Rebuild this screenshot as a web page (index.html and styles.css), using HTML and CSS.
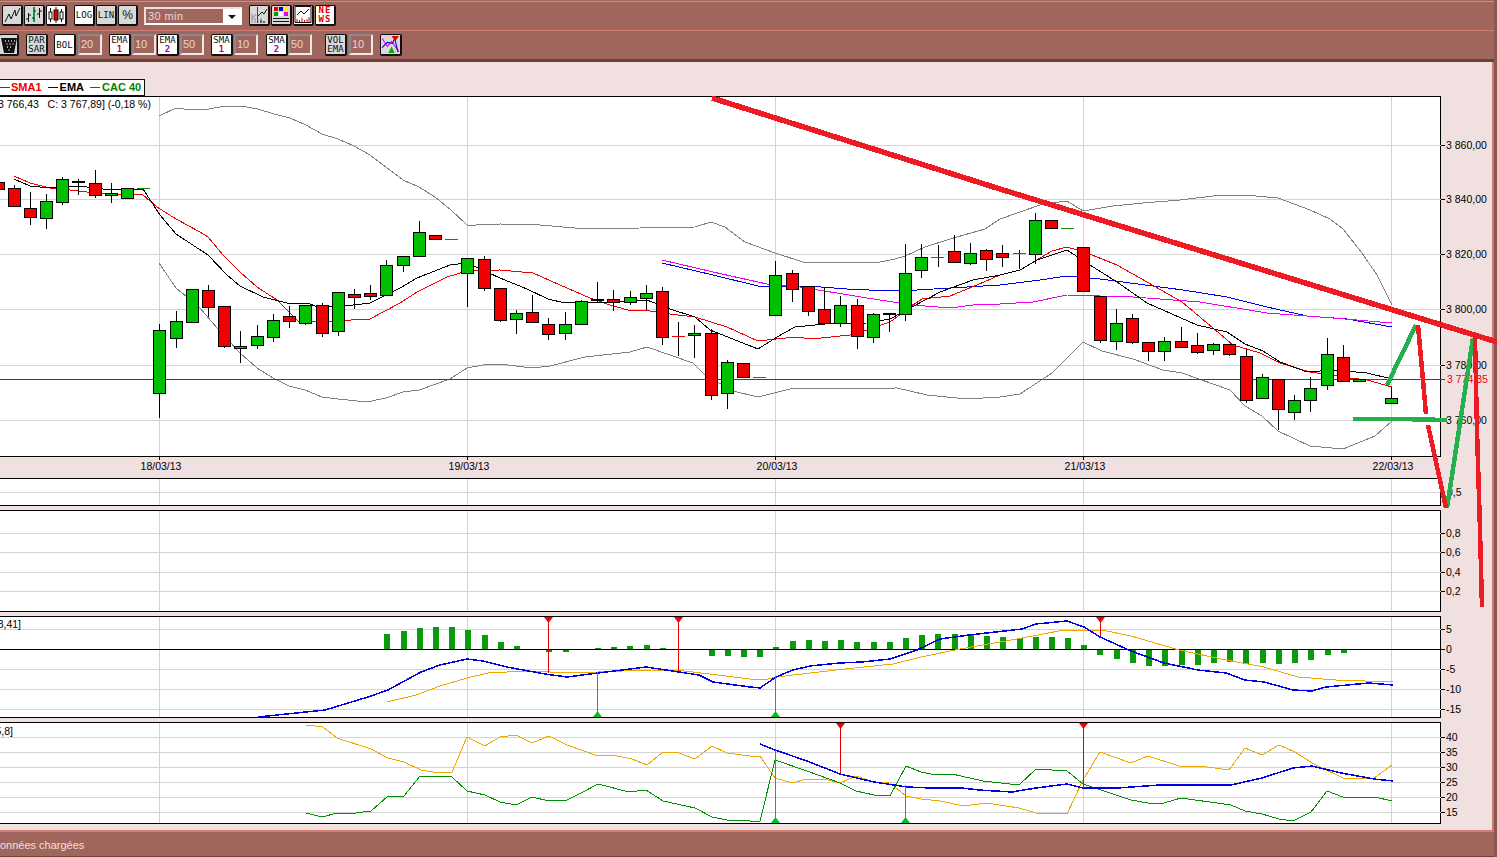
FILE: index.html
```html
<!DOCTYPE html>
<html lang="fr">
<head>
<meta charset="utf-8">
<title>CAC 40</title>
<link rel="stylesheet" href="styles.css">
</head>
<body>
<div class="screen">
  <div class="app">
    <header class="toolbar">
      <div class="row row-top">
        <div class="group">
          <button class="btn grey"><svg class="ico" viewBox="0 0 18 18"><path class="ink" d="M2 16 6 8l2 5 4-9 1 6 4-8"/></svg></button>
          <button class="btn grey"><svg class="ico" viewBox="0 0 18 18"><path class="ink" d="M3.500 7v9M1 13h2.500M3.500 9H6M14.500 2v10M12 8h2.500M14.500 5H17"/><path class="ink-green" d="M9 1v15"/><path class="ink" d="M7 12h2M9 5h2"/></svg></button>
          <button class="btn"><svg class="ico" viewBox="0 0 18 18"><path class="ink" d="M3.500 2v14M9 1v16M14.500 3v13"/><rect class="c-white" x="2" y="6" width="3" height="7"/><rect class="c-red" x="7" y="4" width="4" height="10"/><rect class="c-white" x="13" y="6" width="3" height="7"/></svg></button>
        </div>
        <div class="group">
          <button class="btn">LOG</button>
          <button class="btn grey">LIN</button>
          <button class="btn grey btn-narrow pct">%</button>
        </div>
        <div class="select">
          <span class="select-value">30 min</span>
          <span class="select-arrow"></span>
        </div>
        <div class="group">
          <button class="btn grey"><svg class="ico" viewBox="0 0 18 18"><path class="ink-soft" d="M2 17V8M5 17v-5M8 17v-3M11 17v-5M14 17v-2M2 13 6 8"/><path class="ink-red" d="M7.500 1v16"/><path class="ink" d="M8 10l4-4 2 2 3-5M11 17v-3M14 17v-2"/></svg></button>
          <button class="btn grey"><svg class="ico" viewBox="0 0 18 18"><rect class="sw-red" x="2" y="1" width="4" height="4"/><rect class="sw-blue" x="7" y="1" width="4" height="4"/><rect class="sw-yellow" x="12" y="1" width="4" height="4"/><rect class="sw-green" x="2" y="6" width="4" height="4"/><rect class="sw-white" x="7" y="6" width="4" height="4"/><rect class="sw-magenta" x="12" y="6" width="4" height="4"/><path class="ink" d="M1 12.500h16M1 15.500h16"/></svg></button>
          <button class="btn"><svg class="ico" viewBox="0 0 18 18"><path class="ink" d="M1 .500h16v16H1z"/><path class="ink" d="M3 9l4-4 3 3 5-5"/><path class="ink-red" d="M3 16v-3M5.500 16v-2M8 16v-4M10.500 16v-2M13 16v-3M15 16v-5"/></svg></button>
          <button class="btn two news"><span>NE</span><span>WS</span></button>
        </div>
      </div>
      <div class="row row-bottom">
        <button class="btn btn-trash grey"><svg class="ico" viewBox="0 0 18 18"><path class="fill-ink" d="M1 2h16l-3 15H4z"/><path class="dots" d="M5 5h1M8 5h1M11 5h1M14 5h1M6.500 8h1M9.500 8h1M12.500 8h1M7 11h1M10 11h1M8.500 14h1"/></svg></button>
        <button class="btn btn-wide two grey ml-7"><span>PAR</span><span>SAR</span></button>
        <button class="btn btn-wide ml-6">BOL</button>
        <span class="input ml-2">20</span>
        <button class="btn btn-wide two ml-7"><span>EMA</span><span class="n-red">1</span></button>
        <span class="input ml-1">10</span>
        <button class="btn btn-wide two ml-1"><span>EMA</span><span class="n-purple">2</span></button>
        <span class="input ml-1">50</span>
        <button class="btn btn-wide two ml-7"><span>SMA</span><span class="n-red">1</span></button>
        <span class="input ml-1">10</span>
        <button class="btn btn-wide two ml-8"><span>SMA</span><span class="n-purple">2</span></button>
        <span class="input">50</span>
        <button class="btn btn-wide two grey ml-13"><span>VOL</span><span>EMA</span></button>
        <span class="input ml-2">10</span>
        <button class="btn btn-wide grey ml-7"><svg class="ico" viewBox="0 0 18 18"><path class="thin-magenta" d="M1 3l5 8 4-5 7 10"/><path class="thin-blue" d="M1 12l5-5 5 1 2-5 3 13"/><path class="c-green" d="M7 17l3-6 3 6z"/><path class="c-redfill" d="M10 1h7l-3.500 5z"/></svg></button>
      </div>
    </header>

    <main class="workspace">
      <div class="legend">
        <span class="dash dash-red"></span><b class="l-red">SMA1</b>
        <span class="dash dash-black"></span><b class="l-black">EMA</b>
        <span class="dash dash-green"></span><b class="l-green">CAC 40</b>
      </div>

      <svg class="panel panel-main" viewBox="0 96 1492 382">
        <rect class="plot" x="-5" y="96.500" width="1445.500" height="360"/>
        <path class="grid" d="M0 145.500H1441M0 199.500H1441M0 254.500H1441M0 309.500H1441M0 365.500H1441M0 420.500H1441M159.500 97V456M467.500 97V456M775.500 97V456M1083.500 97V456M1391.500 97V456"/>
        <path class="boll" d="M159 116 176 108 192 110 209 109 225 106 241 106 258 109 274 114 290 118 306 125 322 134 338 139 354 146 370 155 386 167 403 180 419 187 435 197 451 210 467 225 476 225 500 224 540 225 575 228 605 229 640 228 695 227 711 222 725 227 745 242 775 253 803 262 825 262 880 262 895 259 905 256 925 247 950 239 985 229 1000 219 1020 212 1043 204 1067 201 1083 211 1113 206 1143 203 1180 200 1213 196 1245 195 1278 198 1310 210 1330 219 1343 229 1362 253 1377 275 1392 305"/>
        <path class="boll" d="M159 263 176 288 187 297 200 308 217 328 240 353 257 368 273 378 289 386 305 390 322 397 338 399 367 402 386 398 403 392 419 390 450 379 467 368 483 365 500 364 532 368 550 366 585 357 630 352 647 347 693 363 705 375 733 391 758 397 790 389 897 388 927 395 967 399 1000 397 1020 394 1052 373 1083 342 1102 351 1133 359 1163 370 1182 373 1230 390 1245 406 1262 416 1278 431 1310 446 1343 449 1375 436 1392 421"/>
        <path class="ln-blue" d="M662 263 713 275 758 286 808 286 847 289 890 291 917 290 1000 285 1040 280 1067 276 1100 279 1183 290 1227 297 1267 307 1307 316 1347 319 1392 327"/>
        <path class="ln-magenta" d="M662 260 713 272 767 284 800 287 867 298 913 305 950 308 973 305 1000 304 1033 302 1067 295 1133 297 1200 302 1267 313 1333 318 1392 323"/>
        <path class="hline" d="M0 379.500H1445"/>
        <path class="ln-red" d="M14 176 30 183 50 188 70 190 87 192 110 194 143 195 157 207 176 219 200 232 208 237 223 255 240 272 257 287 277 300 298 321 333 321 370 319 400 303 417 292 447 277 467 271 500 270 533 273 560 285 590 298 610 305 628 310 650 311 670 314 695 317 727 327 758 341 795 337 812 339 850 335 867 330 890 322 913 305 922 299 950 296 977 285 1000 275 1020 270 1052 251 1067 247 1087 253 1117 265 1140 278 1182 302 1213 328 1233 345 1260 353 1280 363 1310 372 1350 378 1367 380 1392 387"/>
        <path class="ln-black" d="M14 179 30 186 50 188 70 186 87 187 103 189 143 189 160 215 176 234 208 255 227 275 240 286 263 297 287 303 308 303 317 307 345 306 370 303 400 288 417 278 450 265 467 263 500 278 527 289 548 299 565 303 613 302 647 300 670 309 695 317 710 330 758 349 777 337 795 327 825 324 867 323 890 319 912 307 940 292 973 280 1000 275 1020 270 1037 260 1067 250 1090 265 1117 282 1147 303 1197 325 1227 332 1245 344 1263 351 1280 362 1307 372 1333 370 1367 373 1392 379"/>
        <path class="wick" d="M14.500 185V188M30.500 192V225M46.500 194V229M62.500 177V205M78.500 179V195M95.500 170V198M111.500 183V203M159.500 324V418M176.500 311V348M208.500 285V317M224.500 346V348M240.500 331V363M257.500 325V349M273.500 314V342M289.500 306V328M305.500 323V325M322.500 303V337M338.500 331V336M354.500 289V309M370.500 285V300M386.500 260V265M403.500 265V272M419.500 221V232M467.500 273V307M484.500 256V291M500.500 320V322M516.500 310V334M532.500 295V312M548.500 318V340M565.500 312V340M581.500 300V301M597.500 282V302M613.500 290V311M630.500 291V305M646.500 285V310M662.500 287V345M678.500 322V356M694.500 325V358M711.500 329V400M727.500 360V409M775.500 261V275M792.500 270V302M808.500 311V316M824.500 287V309M840.500 296V327M857.500 299V349M873.500 313V343M889.500 313V332M905.500 244V321M921.500 244V278M938.500 245V267M954.500 235V263M970.500 243V265M986.500 249V271M1002.500 245V267M1019.500 250V269M1035.500 213V264M1100.500 340V343M1116.500 309V350M1132.500 314V344M1148.500 351V361M1164.500 337V361M1181.500 327V348M1197.500 333V354M1213.500 343V355M1229.500 354V356M1246.500 349V403M1262.500 374V377M1278.500 409V430M1294.500 395V420M1310.500 377V412M1327.500 338V390M1343.500 345V357M1391.500 387V398"/>
        <path class="body-red" d="M-7.500 182h12v7h-12zM8.500 188h12v18h-12zM24.500 208h12v9h-12zM89.500 183h12v12h-12zM202.500 290h12v17h-12zM218.500 306h12v40h-12zM283.500 316h12v5h-12zM316.500 305h12v28h-12zM348.500 294h12v3h-12zM364.500 293h12v3h-12zM429.500 235h12v4h-12zM478.500 259h12v29h-12zM494.500 288h12v32h-12zM526.500 312h12v10h-12zM542.500 324h12v10h-12zM607.500 299h12v3h-12zM656.500 291h12v46h-12zM705.500 333h12v62h-12zM737.500 363h12v14h-12zM786.500 273h12v16h-12zM802.500 286h12v25h-12zM818.500 309h12v14h-12zM851.500 305h12v31h-12zM948.500 251h12v11h-12zM980.500 250h12v9h-12zM996.500 253h12v4h-12zM1045.500 220h12v8h-12zM1077.500 247h12v44h-12zM1094.500 296h12v44h-12zM1126.500 318h12v24h-12zM1142.500 342h12v9h-12zM1175.500 341h12v6h-12zM1191.500 345h12v7h-12zM1223.500 344h12v10h-12zM1240.500 356h12v44h-12zM1272.500 379h12v30h-12zM1337.500 357h12v24h-12z"/>
        <path class="body-green" d="M40.500 201h12v17h-12zM56.500 179h12v23h-12zM105.500 193h12v2h-12zM121.500 188h12v10h-12zM153.500 330h12v63h-12zM170.500 321h12v17h-12zM186.500 289h12v33h-12zM234.500 346h12v2h-12zM251.500 336h12v9h-12zM267.500 320h12v17h-12zM299.500 305h12v18h-12zM332.500 292h12v39h-12zM380.500 265h12v30h-12zM397.500 256h12v9h-12zM413.500 232h12v24h-12zM461.500 258h12v15h-12zM510.500 313h12v6h-12zM559.500 324h12v9h-12zM575.500 301h12v23h-12zM624.500 297h12v5h-12zM640.500 293h12v5h-12zM688.500 333h12v2h-12zM721.500 362h12v31h-12zM769.500 275h12v40h-12zM834.500 305h12v18h-12zM867.500 314h12v23h-12zM899.500 273h12v41h-12zM915.500 257h12v13h-12zM964.500 253h12v10h-12zM1029.500 220h12v34h-12zM1110.500 323h12v18h-12zM1158.500 341h12v10h-12zM1207.500 344h12v6h-12zM1256.500 377h12v21h-12zM1288.500 400h12v12h-12zM1304.500 388h12v12h-12zM1321.500 354h12v31h-12zM1353.500 379h12v2h-12zM1385.500 398h12v5h-12z"/>
        <path class="doji" d="M72 181.500h13M591 300h13M883 313.500h13"/>
        <path class="flat-green" d="M137 188.500h13M445 239.500h13M753 377.500h13M931 257.500h13M1013 253.500h13M1061 228.500h13M1369 379.500h13"/>
        <path class="flat-red" d="M672 336.500h13"/>
        <path class="tick" d="M1441 145.500h4M1441 199.500h4M1441 254.500h4M1441 309.500h4M1441 365.500h4M1441 420.500h4M159.500 456v4M467.500 456v4M775.500 456v4M1083.500 456v4M1391.500 456v4"/>
        <text class="label" x="-2" y="108">3 766,43   C: 3 767,89] (-0,18 %)</text>
        <text class="label" x="1446" y="149">3 860,00</text>
        <text class="label" x="1446" y="203">3 840,00</text>
        <text class="label" x="1446" y="258">3 820,00</text>
        <text class="label" x="1446" y="313">3 800,00</text>
        <text class="label" x="1446" y="369">3 780,00</text>
        <text class="label label-red" x="1447" y="383">3 774,35</text>
        <text class="label" x="1446" y="424">3 760,00</text>
        <text class="label centered" x="161" y="470">18/03/13</text>
        <text class="label centered" x="469" y="470">19/03/13</text>
        <text class="label centered" x="777" y="470">20/03/13</text>
        <text class="label centered" x="1085" y="470">21/03/13</text>
        <text class="label centered" x="1393" y="470">22/03/13</text>
      </svg>

      <svg class="panel panel-vol" viewBox="0 478 1492 28">
        <rect class="plot" x="-5" y="478.500" width="1445.500" height="27"/>
        <path class="grid" d="M0 492.500H1441M159.500 479V505M467.500 479V505M775.500 479V505M1083.500 479V505M1391.500 479V505"/>
        <path class="tick" d="M1441 492.500h4"/>
        <text class="label" x="1447" y="496">0,5</text>
      </svg>

      <svg class="panel panel-osc gap-top" viewBox="0 510 1492 102">
        <rect class="plot" x="-5" y="510.500" width="1445.500" height="101"/>
        <path class="grid" d="M0 533.500H1441M0 552.500H1441M0 572.500H1441M0 591.500H1441M159.500 511V611M467.500 511V611M775.500 511V611M1083.500 511V611M1391.500 511V611"/>
        <path class="tick" d="M1441 533.500h4M1441 552.500h4M1441 572.500h4M1441 591.500h4"/>
        <text class="label" x="1446" y="537">0,8</text>
        <text class="label" x="1446" y="556">0,6</text>
        <text class="label" x="1446" y="576">0,4</text>
        <text class="label" x="1446" y="595">0,2</text>
      </svg>

      <svg class="panel panel-osc gap-top" viewBox="0 616 1492 102">
        <rect class="plot" x="-5" y="616.500" width="1445.500" height="101"/>
        <path class="grid" d="M0 629.500H1441M0 669.500H1441M0 689.500H1441M0 709.500H1441M159.500 617V717M467.500 617V717M775.500 617V717M1083.500 617V717M1391.500 617V717"/>
        <path class="hist" d="M387 649v-15M404 649v-18M420 649v-21M436 649v-22M452 649v-22M468 649v-19M485 649v-14M501 649v-7M517 649v-3M549 649v3M566 649v3M598 649v-1M614 649v-2M630 649v-3M647 649v-4M663 649v-1M712 649v7M728 649v7M744 649v8M760 649v8M776 649v-2M793 649v-8M809 649v-9M825 649v-8M841 649v-9M857 649v-7M874 649v-7M890 649v-7M906 649v-11M922 649v-14M938 649v-15M955 649v-15M971 649v-14M987 649v-13M1003 649v-12M1020 649v-11M1036 649v-12M1052 649v-12M1068 649v-11M1084 649v-4M1100 649v6M1117 649v10M1133 649v14M1149 649v17M1165 649v17M1182 649v16M1198 649v16M1214 649v14M1230 649v13M1246 649v15M1263 649v14M1279 649v15M1295 649v14M1311 649v11M1328 649v6M1344 649v4M1360 649v1"/>
        <path class="zero" d="M0 649.500H1441"/>
        <path class="ln-orange" d="M387 702 416 695 440 686 467 678 488 673 526 671 574 673 622 671 651 670 684 671 718 675 750 679 764 680 776 677 845 669 893 664 921 657 960 649 1017 639 1064 630 1102 630 1131 636 1179 650 1226 660 1264 667 1298 677 1336 680 1393 682"/>
        <path class="ln-blue thick" d="M258 717 325 710 368 697 388 690 421 672 440 665 467 659 483 661 507 667 545 674 567 677 598 673 646 667 679 672 699 675 713 682 750 687 760 688 776 677 793 670 810 666 840 663 862 662 890 659 917 650 940 639 969 635 1022 629 1036 624 1067 621 1084 627 1100 637 1131 651 1164 663 1198 670 1226 673 1245 680 1264 682 1293 690 1312 691 1326 687 1369 683 1393 685"/>
        <path class="sig-red" d="M548.500 617V673M678.500 617V671M1100.500 617V636"/>
        <path class="sig-green" d="M597.500 672V717M775.500 676V717"/>
        <path class="tri-red" d="M544 617h9l-4.500 6zM674 617h9l-4.500 6zM1096 617h9l-4.500 6z"/>
        <path class="tri-green" d="M593 717h9l-4.500-6zM771 717h9l-4.500-6z"/>
        <path class="tick" d="M1441 629.500h4M1441 649.500h4M1441 669.500h4M1441 689.500h4M1441 709.500h4"/>
        <text class="label" x="21" y="628" text-anchor="end">8,41]</text>
        <text class="label" x="1446" y="633">5</text>
        <text class="label" x="1446" y="653">0</text>
        <text class="label" x="1446" y="673">-5</text>
        <text class="label" x="1446" y="693">-10</text>
        <text class="label" x="1446" y="713">-15</text>
      </svg>

      <svg class="panel panel-osc gap-top" viewBox="0 722 1492 102">
        <rect class="plot" x="-5" y="722.500" width="1445.500" height="101"/>
        <path class="grid" d="M0 737.500H1441M0 752.500H1441M0 767.500H1441M0 782.500H1441M0 797.500H1441M0 812.500H1441M159.500 723V823M467.500 723V823M775.500 723V823M1083.500 723V823M1391.500 723V823"/>
        <path class="ln-orange" d="M306 725 323 727 337 738 371 749 388 758 404 762 421 770 433 772 452 772 467 737 485 746 500 737 516 735 532 743 549 736 567 745 598 756 612 755 632 759 647 765 663 752 679 753 695 759 712 746 727 753 750 756 760 756 775 778 792 783 807 779 824 779 840 783 856 776 874 782 890 783 906 796 921 799 940 801 964 806 986 803 1019 808 1036 813 1067 814 1083 780 1100 752 1131 763 1148 756 1179 766 1200 766 1229 770 1245 748 1262 755 1279 745 1295 752 1312 763 1343 778 1374 778 1392 765"/>
        <path class="ln-green" d="M306 813 322 817 337 813 356 813 371 811 387 797 404 796 420 776 452 777 467 791 485 795 500 802 516 805 532 797 549 801 567 800 581 793 598 784 629 792 646 790 663 801 695 808 712 817 727 820 750 821 760 821 775 760 807 771 840 783 856 791 874 795 890 796 906 766 921 772 936 775 952 774 983 781 1019 785 1036 769 1067 771 1083 784 1131 800 1148 803 1164 803 1181 798 1231 805 1245 811 1262 814 1279 819 1293 821 1311 812 1327 791 1343 797 1375 797 1392 801"/>
        <path class="ln-blue thick" d="M760 744 775 750 807 761 840 774 874 782 907 787 931 788 962 788 979 790 1012 792 1036 788 1067 784 1083 788 1117 788 1160 785 1231 785 1262 778 1293 768 1312 766 1341 773 1374 779 1393 781"/>
        <path class="sig-red" d="M840.500 723V774M1083.500 723V788"/>
        <path class="sig-green" d="M775.500 750V823M905.500 785V823"/>
        <path class="tri-red" d="M836 723h9l-4.500 6zM1079 723h9l-4.500 6z"/>
        <path class="tri-green" d="M771 823h9l-4.500-6zM901 823h9l-4.500-6z"/>
        <path class="tick" d="M1441 737.500h4M1441 752.500h4M1441 767.500h4M1441 782.500h4M1441 797.500h4M1441 812.500h4"/>
        <text class="label" x="13" y="735" text-anchor="end">5,8]</text>
        <text class="label" x="1446" y="741">40</text>
        <text class="label" x="1446" y="756">35</text>
        <text class="label" x="1446" y="771">30</text>
        <text class="label" x="1446" y="786">25</text>
        <text class="label" x="1446" y="801">20</text>
        <text class="label" x="1446" y="816">15</text>
      </svg>
    </main>

    <footer class="status"><span class="status-text">Données chargées</span></footer>
  </div>

  <svg class="annotations" viewBox="0 0 1497 857">
    <path class="trend" d="M712 98 1000 189 1497 342"/>
    <path class="pen-green" d="M1353 419 1400 419 1447 420M1387 385 1416 325M1447 508 1473 338"/>
    <path class="pen-red" d="M1418 325 1426 414M1428 425 1446 508M1475 338 1477 430 1480 530 1482 607"/>
  </svg>
</div>
</body>
</html>
```
FILE: styles.css
```css
* { box-sizing: border-box; }
html, body { margin: 0; padding: 0; overflow: hidden; }
body { width: 1497px; height: 857px; font-family: "Liberation Sans", Arial, sans-serif; }

.screen { position: relative; width: 1497px; height: 857px; overflow: hidden; }
.app { display: flex; flex-direction: column; width: 1497px; height: 857px; border-right: 3px solid #8a5a52; background: #a0665e; }

/* toolbar */
.toolbar { flex: none; height: 62px; padding-top: 1px; background: #a0665e; border-bottom: 3px solid #6f4239; }
.row { display: flex; align-items: flex-start; padding-top: 3px; }
.row-top { height: 29px; border-top: 1px solid #d48a80; gap: 7px; padding-left: 2px; }
.row-bottom { height: 29px; border-top: 1px solid #d67d72; margin-left: -1px; }
.group { display: flex; gap: 1px; }

.btn { display: flex; flex-direction: column; align-items: center; justify-content: center; flex: none; width: 21px; height: 21px; padding: 0; background: #fff; border: 1px solid #111; border-right-width: 2px; border-bottom-width: 2px; border-radius: 2px; font: 9px/10px "DejaVu Sans Mono", monospace; color: #111; }
.btn.grey { background: #d9d9d9; }
.btn-narrow { width: 20px; }
.btn-wide { width: 22px; height: 22px; }
.btn-trash { width: 20px; height: 22px; }
.pct { font: 12px "Liberation Sans", sans-serif; }
.two { line-height: 9px; }
.news { color: #e00000; font-weight: bold; letter-spacing: 1px; background: #fff; }
.n-red { color: #e00000; font-weight: bold; }
.n-purple { color: #a000c0; font-weight: bold; }
.ico { display: block; width: 18px; height: 18px; }
.btn-wide .ico { width: 19px; height: 19px; }
.ink { fill: none; stroke: #111; stroke-width: 1; }
.ink-green { fill: none; stroke: #00a040; stroke-width: 2; }
.ink-red { fill: none; stroke: #e00000; stroke-width: 1; }
.ink-soft { fill: none; stroke: #888; stroke-width: 1; }
.c-white { fill: #fff; stroke: #111; }
.c-red { fill: #e00000; stroke: #111; }
.c-green { fill: #00b000; }
.c-redfill { fill: #e00000; }
.fill-ink { fill: #111; }
.dots { fill: none; stroke: #ddd; stroke-width: 1.500; }
.thin-magenta { fill: none; stroke: #f000f0; }
.thin-blue { fill: none; stroke: #0000e0; }
.sw-red { fill: #e00000; }
.sw-blue { fill: #0000f0; }
.sw-yellow { fill: #f8f000; }
.sw-green { fill: #00a000; }
.sw-white { fill: #fff; }
.sw-magenta { fill: #f000f0; }

.select { display: flex; flex: none; width: 98px; height: 18px; margin: 2px 0 0 -1px; background: #fff; border: 2px solid #e8e0de; border-right-color: #fff; border-bottom-color: #fff; }
.select-value { width: 77px; padding-left: 2px; background: #a0665e; color: #e6d6d2; font-size: 11px; line-height: 14px; letter-spacing: .4px; }
.select-arrow { position: relative; flex: 1; }
.select-arrow::after { content: ""; position: absolute; left: 5px; top: 6px; border: 4px solid transparent; border-top: 4px solid #111; border-bottom: 0; }

.input { flex: none; width: 24px; height: 21px; padding-left: 0; background: #a0665e; border: 2px solid #f0e8e6; border-top-color: #8a8a8a; border-left-color: #8a8a8a; color: #e6d6d2; font-size: 11px; line-height: 17px; text-indent: 1px; }
.ml-1 { margin-left: 1px; }
.ml-2 { margin-left: 2px; }
.ml-6 { margin-left: 6px; }
.ml-7 { margin-left: 7px; }
.ml-8 { margin-left: 8px; }
.ml-13 { margin-left: 13px; }

/* workspace */
.workspace { flex: none; width: 1494px; height: 770px; padding-top: 17px; background: #f0e0e0; border-right: 2px solid #c87a70; border-bottom: 2px solid #d67d72; }
.legend { display: flex; align-items: center; width: 146px; height: 17px; margin-left: -1px; background: #fff; border: 1px solid #111; font-size: 11px; line-height: 15px; white-space: nowrap; }
.legend b { font-weight: bold; }
.dash { flex: none; width: 10px; height: 1px; }
.dash-red { background: #e00000; margin-right: 1px; }
.dash-black { background: #111; margin: 0 2px 0 6px; }
.dash-green { background: #008000; margin: 0 2px 0 6px; }
.l-red { color: #f00000; }
.l-black { color: #000; }
.l-green { color: #008000; }

.panel { display: block; width: 1492px; overflow: hidden; }
.panel-main { height: 382px; margin-top: 0; }
.panel-vol { height: 28px; }
.panel-osc { height: 102px; }
.gap-top { margin-top: 4px; }

.plot { fill: #fff; stroke: #000; stroke-width: 1; shape-rendering: crispEdges; }
.grid { fill: none; stroke: #d4d4d4; stroke-width: 1; shape-rendering: crispEdges; }
.tick, .wick, .zero { fill: none; stroke: #000; stroke-width: 1; shape-rendering: crispEdges; }
.hline { fill: none; stroke: #d80000; stroke-width: 1; shape-rendering: crispEdges; }
.boll { fill: none; stroke: #808080; stroke-width: 1; shape-rendering: crispEdges; }
.ln-red { fill: none; stroke: #f00000; stroke-width: 1; shape-rendering: crispEdges; }
.ln-black { fill: none; stroke: #000; stroke-width: 1; shape-rendering: crispEdges; }
.ln-blue { fill: none; stroke: #0000e8; stroke-width: 1; shape-rendering: crispEdges; }
.ln-blue.thick { stroke-width: 1.500; }
.ln-magenta { fill: none; stroke: #f000f0; stroke-width: 1; shape-rendering: crispEdges; }
.ln-orange { fill: none; stroke: #f0a800; stroke-width: 1; shape-rendering: crispEdges; }
.ln-green { fill: none; stroke: #009000; stroke-width: 1; shape-rendering: crispEdges; }
.body-red { fill: #f00000; stroke: #000; stroke-width: 1; shape-rendering: crispEdges; }
.body-green { fill: #00c000; stroke: #000; stroke-width: 1; shape-rendering: crispEdges; }
.doji { fill: none; stroke: #000; stroke-width: 2; shape-rendering: crispEdges; }
.flat-green { fill: none; stroke: #009000; stroke-width: 1; shape-rendering: crispEdges; }
.flat-red { fill: none; stroke: #f00000; stroke-width: 1; shape-rendering: crispEdges; }
.hist { fill: none; stroke: #0a9a0a; stroke-width: 6; shape-rendering: crispEdges; }
.sig-red { fill: none; stroke: #e00000; stroke-width: 1; shape-rendering: crispEdges; }
.sig-green { fill: none; stroke: #00c020; stroke-width: 1; shape-rendering: crispEdges; }
.tri-red { fill: #f00000; }
.tri-green { fill: #00c020; }
.label { font: 10.500px "Liberation Sans", Arial, sans-serif; fill: #000; white-space: pre; }
.label-red { fill: #f00000; }
.centered { text-anchor: middle; }

/* status bar */
.status { flex: none; height: 25px; overflow: hidden; background: #a0665e; border-bottom: 1px solid #6f4239; }
.status-text { display: block; margin-left: -8px; color: #eee0dc; font-size: 11px; line-height: 26px; white-space: nowrap; }

/* hand-drawn annotations over the chart */
.annotations { position: absolute; left: 0; top: 0; width: 1497px; height: 857px; pointer-events: none; }
.trend { fill: none; stroke: #ed1c24; stroke-width: 5.500; shape-rendering: crispEdges; }
.pen-green { fill: none; stroke: #22b14c; stroke-width: 4.500; shape-rendering: crispEdges; }
.pen-red { fill: none; stroke: #ed1c24; stroke-width: 4.500; shape-rendering: crispEdges; }
```
